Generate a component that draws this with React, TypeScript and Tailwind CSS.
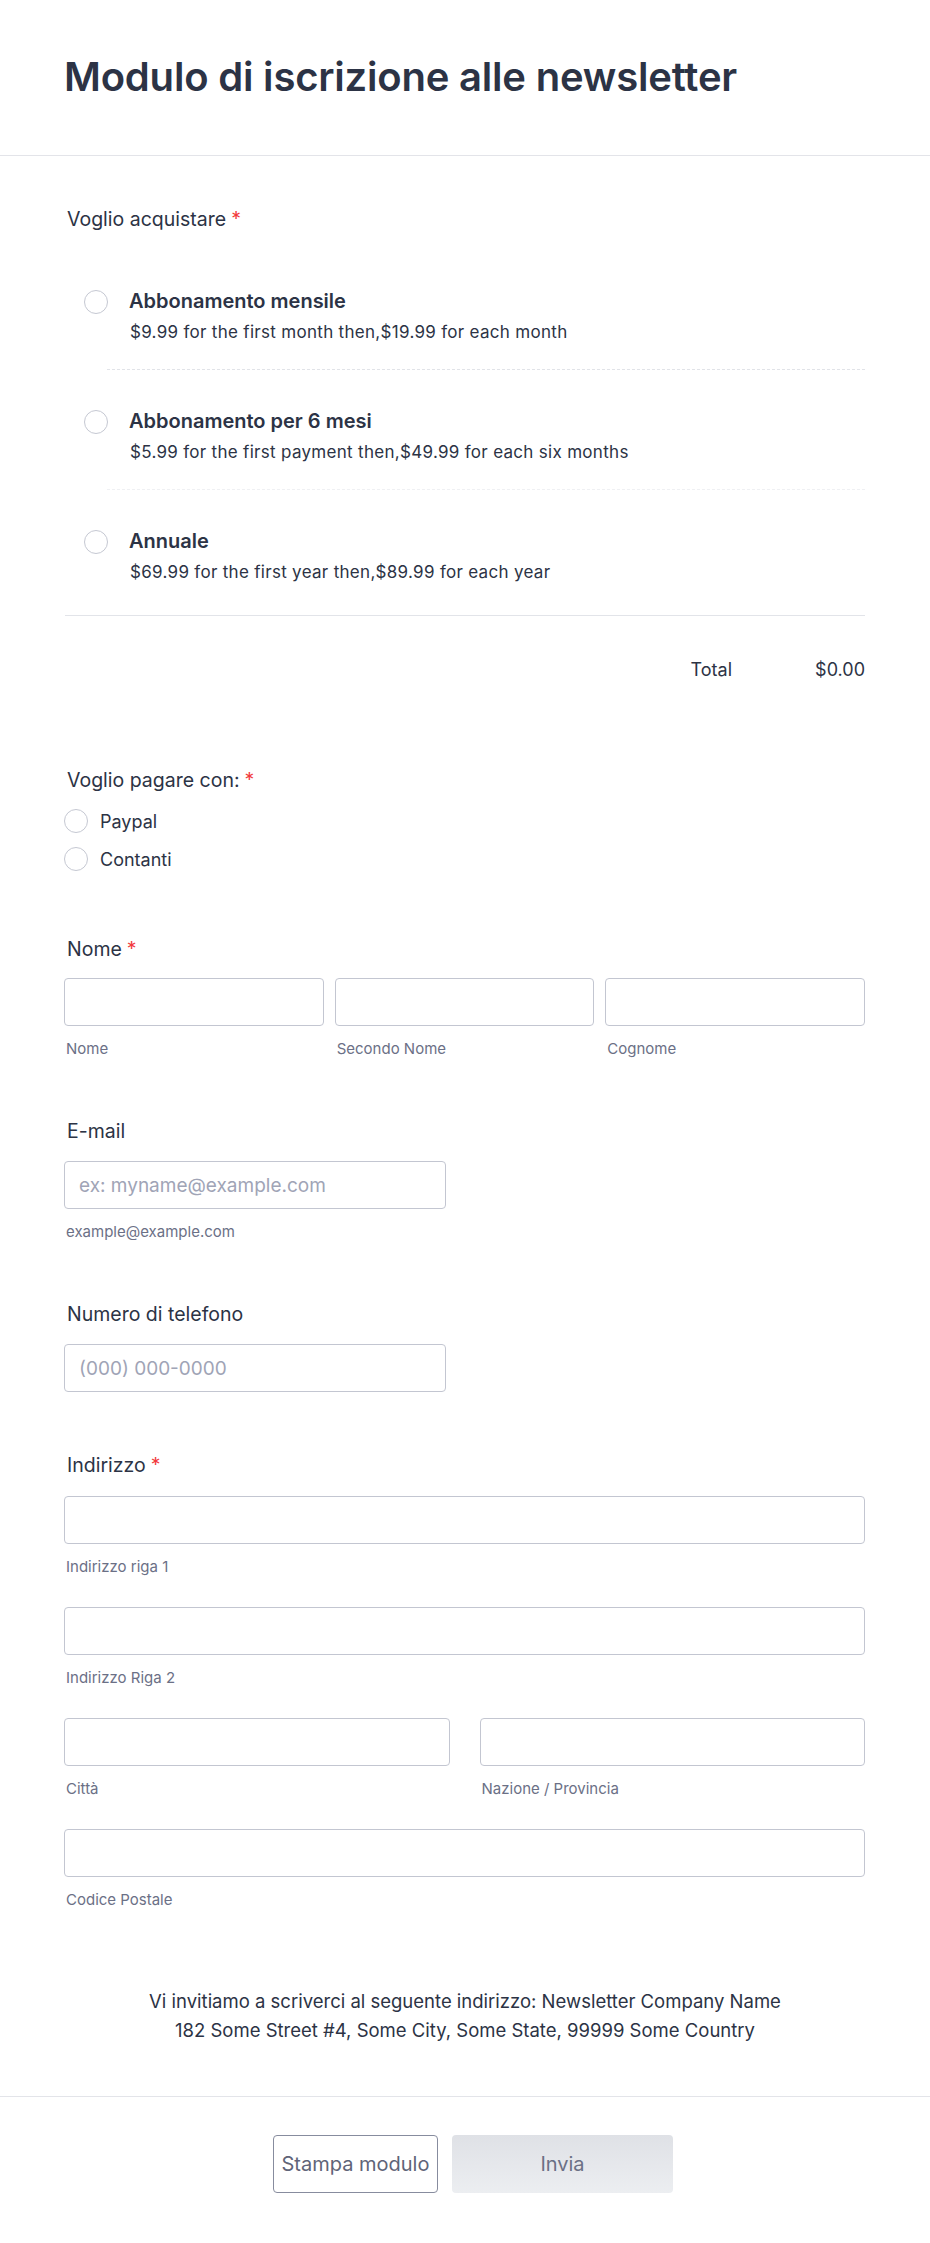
import React from 'react';

const products = [
  { name: 'Abbonamento mensile', desc: '$9.99 for the first month then,$19.99 for each month', line: 'dashed' },
  { name: 'Abbonamento per 6 mesi', desc: '$5.99 for the first payment then,$49.99 for each six months', line: 'dotted' },
  { name: 'Annuale', desc: '$69.99 for the first year then,$89.99 for each year', line: 'none' },
];

const Star = () => <span className="text-[#f23a3c] ml-[5px]">*</span>;

const Radio = () => (
  <span className="block w-[24px] h-[24px] shrink-0 rounded-full border-[1.5px] border-[#c5c8d2] bg-white" />
);

const Label = ({ text, req }: { text: string; req?: boolean }) => (
  <div className="text-[19.5px] leading-[24px] font-normal text-[#2c3345] pl-[2px]">
    {text}
    {req && <Star />}
  </div>
);

const Input = ({ placeholder, className = '' }: { placeholder?: string; className?: string }) => (
  <input
    placeholder={placeholder}
    className={`h-[48px] rounded-[4px] border border-[#c3c6d1] bg-white px-[14px] text-[19px] text-[#2c3345] placeholder:text-[#a0a4b6] outline-none ${className}`}
  />
);

const Sub = ({ text }: { text: string }) => (
  <div className="mt-[13px] text-[15px] leading-[20px] text-[#6b7086] pl-[2px]">{text}</div>
);

export default function App() {
  return (
    <div className="min-h-screen bg-white text-[#2c3345] font-['Inter','Liberation_Sans',sans-serif]">
      {/* header */}
      <div className="px-[64px] pt-[53px] pb-[54px] border-b border-[#e3e4e9]">
        <h1 className="text-[40px] leading-[48px] font-semibold tracking-[-0.2px] text-[#2c3345]">
          Modulo di iscrizione alle newsletter
        </h1>
      </div>

      <div className="px-[65px]">
        {/* prodotti */}
        <div className="pt-[51px]">
          <Label text="Voglio acquistare" req />
          <div className="mt-[19px] border-b border-[#e2e4e9]">
            {products.map((p, i) => (
              <div key={p.name}>
                <div className={`flex gap-[21px] pl-[19px] pt-[39px] ${i === 2 ? 'pb-[31px]' : 'pb-[25px]'}`}>
                  <div className="mt-[1px]">
                    <Radio />
                  </div>
                  <div>
                    <div className="text-[20px] leading-[24px] font-semibold text-[#2c3345]">{p.name}</div>
                    <div className="mt-[7px] pl-[1px] text-[17px] leading-[24px] tracking-[0.3px] text-[#2c3345]">{p.desc}</div>
                  </div>
                </div>
                {p.line === 'dashed' && <div className="ml-[42px] border-b border-dashed border-[#e1e3e8]" />}
                {p.line === 'dotted' && <div className="ml-[42px] border-b border-dashed border-[#eff0f3]" />}
              </div>
            ))}
          </div>
          <div className="flex justify-end items-center mt-[42px] text-[18px] leading-[24px] text-[#2c3345]">
            <span>Total</span>
            <span className="w-[133px] text-right">$0.00</span>
          </div>
        </div>

        {/* pagamento */}
        <div className="mt-[86px]">
          <Label text="Voglio pagare con:" req />
          <div className="mt-[17px] flex flex-col gap-[14px]">
            {['Paypal', 'Contanti'].map((o) => (
              <div key={o} className="flex items-center gap-[12px] h-[24px] -ml-[1px]">
                <Radio />
                <span className="text-[18px] text-[#2c3345]">{o}</span>
              </div>
            ))}
          </div>
        </div>

        {/* nome */}
        <div className="mt-[66px]">
          <Label text="Nome" req />
          <div className="mt-[17px] grid grid-cols-3 gap-[11px] -ml-[1px]">
            {['Nome', 'Secondo Nome', 'Cognome'].map((s) => (
              <div key={s}>
                <Input className="w-full" />
                <Sub text={s} />
              </div>
            ))}
          </div>
        </div>

        {/* email */}
        <div className="mt-[60px]">
          <Label text="E-mail" />
          <div className="mt-[18px] -ml-[1px]">
            <Input className="w-[382px]" placeholder="ex: myname@example.com" />
            <Sub text="example@example.com" />
          </div>
        </div>

        {/* telefono */}
        <div className="mt-[60px]">
          <Label text="Numero di telefono" />
          <div className="mt-[18px] -ml-[1px]">
            <Input className="w-[382px]" placeholder="(000) 000-0000" />
          </div>
        </div>

        {/* indirizzo */}
        <div className="mt-[61px]">
          <Label text="Indirizzo" req />
          <div className="mt-[19px] -ml-[1px] flex flex-col gap-[30px]">
            <div>
              <Input className="w-full" />
              <Sub text="Indirizzo riga 1" />
            </div>
            <div>
              <Input className="w-full" />
              <Sub text="Indirizzo Riga 2" />
            </div>
            <div className="grid grid-cols-2 gap-[30px]">
              <div>
                <Input className="w-full" />
                <Sub text="Città" />
              </div>
              <div>
                <Input className="w-full" />
                <Sub text="Nazione / Provincia" />
              </div>
            </div>
            <div>
              <Input className="w-full" />
              <Sub text="Codice Postale" />
            </div>
          </div>
        </div>

        {/* testo */}
        <div className="mt-[77px] pb-[51px] text-center text-[18.5px] leading-[29px] text-[#2c3345]">
          <p>Vi invitiamo a scriverci al seguente indirizzo: Newsletter Company Name</p>
          <p>182 Some Street #4, Some City, Some State, 99999 Some Country</p>
        </div>
      </div>

      {/* footer */}
      <div className="border-t border-[#e3e4e9] pt-[38px] pb-[50px] flex justify-center gap-[14px] pl-[16px]">
        <button className="w-[165px] h-[58px] rounded-[4px] border border-[#878c9e] bg-white text-[20px] text-[#5f6478]">
          Stampa modulo
        </button>
        <button className="w-[221px] h-[58px] rounded-[4px] bg-gradient-to-b from-[#dfe1e6] to-[#eceef1] text-[20px] text-[#6b7085]">
          Invia
        </button>
      </div>
    </div>
  );
}
